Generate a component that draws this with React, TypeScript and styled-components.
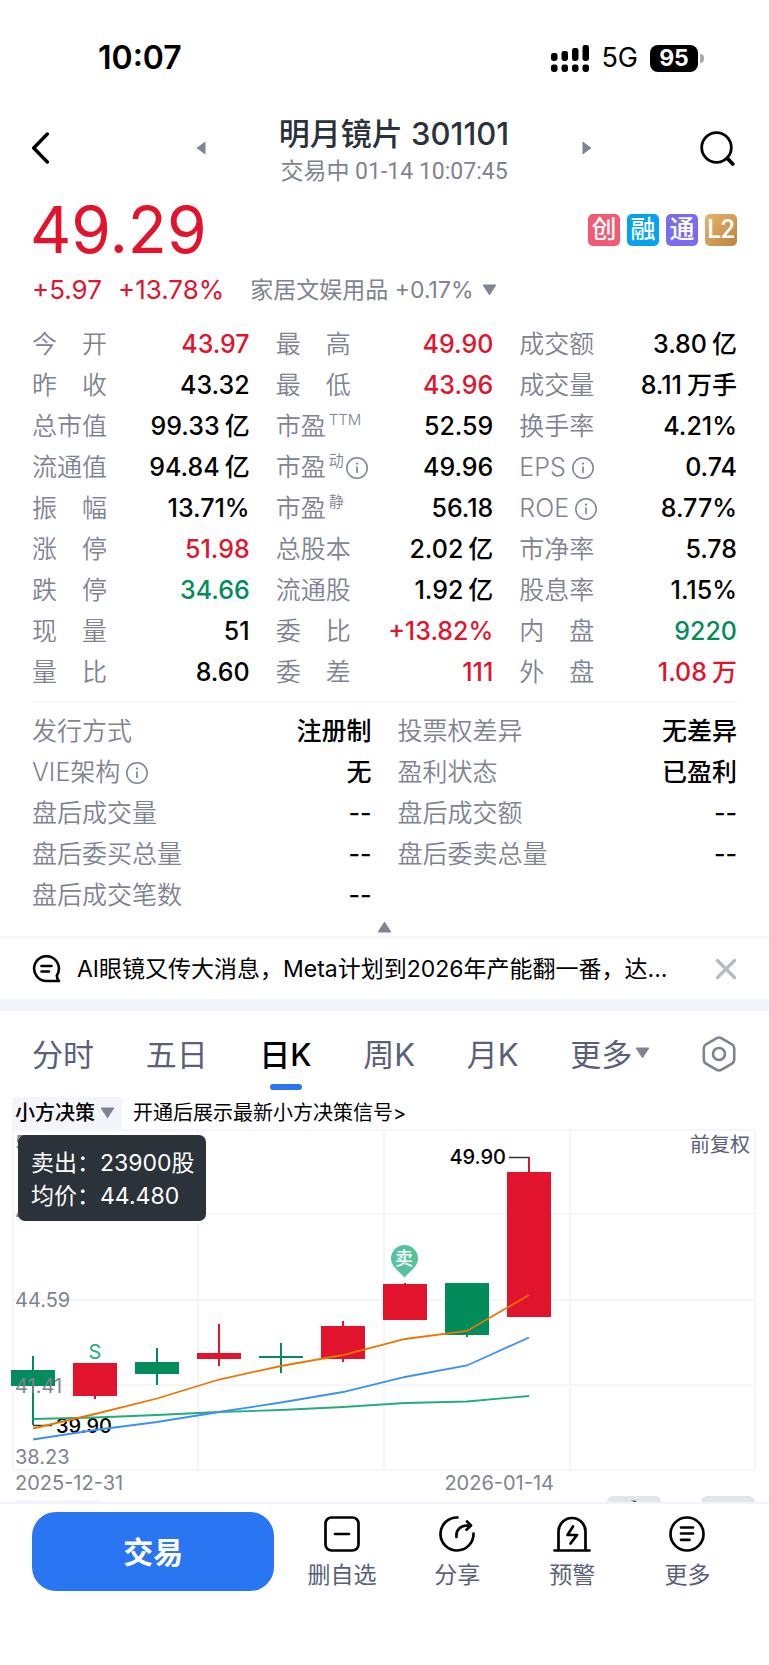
import React from "react";
import styled, { createGlobalStyle, css } from "styled-components";

const color = {
  ink: "#000000",
  title: "#2b3239",
  label: "#7f8392",
  tab: "#5a607a",
  up: "#e2132c",
  down: "#028c5c",
  line: "#f4f5fb",
  blue: "#2a76f2",
};

const GlobalStyle = createGlobalStyle`
  *, *::before, *::after { box-sizing: border-box; }
  body {
    margin: 0;
    background: #ffffff;
    color: ${color.ink};
    font-family: Inter, "Noto Sans CJK SC", sans-serif;
    font-size: 24px;
  }
  button {
    margin: 0;
    padding: 0;
    border: 0;
    background: none;
    color: inherit;
    font: inherit;
    cursor: pointer;
  }
  a { color: inherit; text-decoration: none; }
  h1, p, dl, dd, dt { margin: 0; }
  svg { display: block; flex: none; }
`;

const Page = styled.div`
  min-height: 100vh;
  overflow: hidden;
  background: #ffffff;
`;

/* ---------- status bar ---------- */

const StatusBar = styled.div`
  display: flex;
  align-items: center;
  justify-content: space-between;
  height: 76px;
  padding: 40px 65px 0 98px;
`;

const Clock = styled.span`
  font-size: 32px;
  line-height: 36px;
  font-weight: 600;
`;

const StatusIcons = styled.div`
  display: flex;
  align-items: center;
`;

const Network = styled.span`
  margin: 0 12px;
  font-size: 27px;
  line-height: 36px;
`;

const Battery = styled.span`
  width: 48px;
  height: 27px;
  border-radius: 8px;
  background: ${color.ink};
  color: #ffffff;
  font-size: 23px;
  line-height: 27px;
  font-weight: 700;
  text-align: center;
`;

const BatteryTip = styled.span`
  width: 4px;
  height: 9px;
  margin-left: 2px;
  border-radius: 0 4px 4px 0;
  background: #a9a9a9;
`;

/* ---------- header ---------- */

const Header = styled.header`
  display: flex;
  align-items: center;
  margin-top: 34px;
  padding: 0 32px;
`;

const BackButton = styled.button`
  width: 56px;
`;

const SearchButton = styled.button`
  width: 37px;
`;

const StockSwitcher = styled.div`
  flex: 1;
  display: flex;
  align-items: center;
  justify-content: center;
  gap: 73px;
`;

const StockHeading = styled.div`
  text-align: center;
  white-space: nowrap;
`;

const StockName = styled.h1`
  color: ${color.title};
  font-size: 31px;
  line-height: 48px;
  font-weight: 500;
`;

const StockTime = styled.p`
  color: ${color.label};
  font-family: Roboto, "Noto Sans CJK SC", sans-serif;
  font-size: 23px;
  line-height: 28px;
`;

/* ---------- quote ---------- */

const PriceRow = styled.div`
  display: flex;
  align-items: center;
  justify-content: space-between;
  margin-top: 3px;
  padding: 0 32px 0 30px;
`;

const Price = styled.span`
  color: ${color.up};
  font-size: 64px;
  line-height: 82px;
`;

const Tags = styled.div`
  display: flex;
  gap: 7px;
`;

const Tag = styled.span<{ $bg: string }>`
  width: 32px;
  height: 32px;
  border-radius: 5px;
  background: ${(p) => p.$bg};
  color: #ffffff;
  font-family: Roboto, "Noto Sans CJK SC", sans-serif;
  font-size: 25px;
  line-height: 32px;
  font-weight: 500;
  text-align: center;
`;

const ChangeRow = styled.div`
  display: flex;
  align-items: center;
  padding: 0 32px;
  line-height: 38px;
  white-space: nowrap;
`;

const Change = styled.span`
  margin-right: 16px;
  color: ${color.up};
  font-size: 26px;
`;

const IndustryButton = styled.button`
  display: flex;
  align-items: center;
  gap: 8px;
  margin-left: 10px;
  color: ${color.label};
  font-size: 23px;
  line-height: 38px;
`;

/* ---------- indicator lists ---------- */

const StatGrid = styled.dl<{ $columns: number }>`
  display: grid;
  grid-template-columns: repeat(${(p) => p.$columns}, minmax(0, 1fr));
  column-gap: 26px;
`;

const Stats = styled.section`
  padding: 15px 32px 0;
`;

const MoreStats = styled.section`
  margin: 8px 32px 0;
  padding-top: 8px;
  border-top: 2px solid ${color.line};
`;

const Stat = styled.div`
  display: flex;
  align-items: center;
  justify-content: space-between;
  height: 41px;
  line-height: 41px;
  white-space: nowrap;
`;

const StatLabel = styled.dt`
  display: flex;
  align-items: center;
  color: ${color.label};
  font-size: 25px;
  font-weight: 350;
`;

const Superscript = styled.sup`
  align-self: flex-start;
  margin-left: 3px;
  font-size: 15px;
  line-height: 28px;
`;

const InfoButton = styled.button<{ $tight: boolean }>`
  margin-left: ${(p) => (p.$tight ? 2 : 6)}px;
`;

const StatValue = styled.dd<{ $tone?: Tone }>`
  color: ${(p) => (p.$tone ? color[p.$tone] : color.ink)};
  font-size: 25px;
  font-weight: 500;
`;

const Unit = styled.span`
  margin-left: 5px;
`;

const CollapseButton = styled.button`
  display: flex;
  align-items: flex-end;
  justify-content: center;
  width: 100%;
  height: 20px;
  padding-bottom: 3px;
`;

/* ---------- news ---------- */

const NewsBar = styled.section`
  display: flex;
  align-items: center;
  height: 75px;
  padding: 0 32px;
  border-top: 2px solid ${color.line};
  border-bottom: 12px solid ${color.line};
`;

const NewsLink = styled.a`
  flex: 1;
  min-width: 0;
  margin: 0 24px 0 16px;
  overflow: hidden;
  font-size: 23px;
  line-height: 36px;
  text-overflow: ellipsis;
  white-space: nowrap;
`;

/* ---------- chart tabs ---------- */

const Tabs = styled.nav`
  display: flex;
  align-items: stretch;
  justify-content: space-between;
  height: 86px;
  padding: 0 33px 0 32px;
`;

const Tab = styled.button<{ $active?: boolean }>`
  position: relative;
  display: flex;
  align-items: center;
  gap: 3px;
  padding-bottom: 3px;
  color: ${color.tab};
  font-size: 31px;
  white-space: nowrap;
  ${(p) =>
    p.$active &&
    css`
      color: ${color.ink};
      font-weight: 500;
      &::after {
        content: "";
        position: absolute;
        bottom: 7px;
        left: 50%;
        width: 32px;
        height: 6px;
        margin-left: -16px;
        border-radius: 3px;
        background: ${color.blue};
      }
    `}
`;

const SettingsButton = styled.button`
  display: flex;
  align-items: center;
`;

const SignalRow = styled.div`
  display: flex;
  align-items: center;
  gap: 11px;
  padding: 0 12px;
  font-size: 20px;
  line-height: 32px;
  white-space: nowrap;
`;

const SignalSelect = styled.button`
  display: flex;
  align-items: center;
  gap: 5px;
  height: 32px;
  padding: 0 7px 0 3px;
  border-radius: 4px 4px 0 0;
  background: ${color.line};
  font-weight: 500;
`;

/* ---------- chart ---------- */

const ChartArea = styled.section`
  position: relative;
`;

const ChartSvg = styled.svg`
  width: 100%;
  height: auto;
`;

const AxisText = styled.text`
  fill: ${color.label};
  font-size: 20px;
`;

const MarkText = styled.text`
  fill: ${color.ink};
  font-size: 20px;
  font-weight: 500;
`;

const TradeTooltip = styled.div`
  position: absolute;
  top: 6px;
  left: 18px;
  padding: 12px 11px 8px 13px;
  border-radius: 7px;
  background: #2b3239;
  color: #ffffff;
  font-size: 23px;
  line-height: 33px;
  white-space: nowrap;
`;

const ToolRow = styled.div`
  display: flex;
  align-items: flex-end;
  justify-content: flex-end;
  height: 6px;
  padding: 0 14px;
  gap: 40px;
  overflow: hidden;
`;

const IndicatorPill = styled.div`
  width: 88px;
  height: 2px;
  margin-right: auto;
  border-radius: 4px 4px 0 0;
  background: ${color.line};
`;

const ToolPill = styled.div`
  display: flex;
  align-items: flex-end;
  justify-content: center;
  width: 54px;
  height: 6px;
  border-radius: 6px 6px 0 0;
  background: #e4e5ea;
`;

/* ---------- bottom bar ---------- */

const BottomBar = styled.footer`
  display: flex;
  align-items: center;
  gap: 10px;
  padding: 8px 24px 74px 32px;
  border-top: 2px solid #f1f3fb;
`;

const TradeButton = styled.button`
  flex: 0 0 34%;
  height: 79px;
  padding-bottom: 3px;
  border-radius: 24px;
  background: ${color.blue};
  color: #ffffff;
  font-size: 30px;
  font-weight: 700;
`;

const Actions = styled.div`
  flex: 1;
  display: flex;
  padding-top: 3px;
`;

const Action = styled.button`
  flex: 1;
  display: flex;
  flex-direction: column;
  align-items: center;
  gap: 7px;
  color: ${color.tab};
  font-size: 23px;
  line-height: 31px;
  white-space: nowrap;
`;

/* ---------- icons ---------- */

type Direction = "up" | "down" | "left" | "right";

const trianglePaths: Record<Direction, string> = {
  down: "M1.2 1h12.6L7.5 10.8z",
  up: "M1.2 11h12.6L7.5 1.2z",
  left: "M9 1.2v11.6L1.2 7z",
  right: "M1 1.2v11.6L8.8 7z",
};

function Triangle({ to }: { to: Direction }) {
  const flat = to === "up" || to === "down";
  const w = flat ? 15 : 10;
  const h = flat ? 12 : 14;
  return (
    <svg width={w} height={h} viewBox={`0 0 ${w} ${h}`} aria-hidden="true">
      <path d={trianglePaths[to]} fill={color.label} stroke={color.label} strokeLinejoin="round" />
    </svg>
  );
}

function SignalIcon() {
  const bars = [
    { x: 0, y: 8 },
    { x: 10.5, y: 6 },
    { x: 21, y: 3 },
    { x: 31.5, y: 0 },
  ];
  return (
    <svg width="38" height="27" viewBox="0 0 38 27" aria-hidden="true">
      {bars.map((b) => (
        <g key={b.x}>
          <rect x={b.x} y={b.y} width="6.5" height={16 - b.y} rx="2.4" />
          <rect x={b.x} y="19.5" width="6.5" height="7.5" rx="2.4" />
        </g>
      ))}
    </svg>
  );
}

function InfoIcon() {
  return (
    <svg width="22" height="22" viewBox="0 0 22 22" fill="none" stroke={color.label} aria-hidden="true">
      <circle cx="11" cy="11" r="10.2" strokeWidth="1.5" />
      <path d="M11 9.5v6.5" strokeWidth="1.7" />
      <circle cx="11" cy="6.6" r="1.1" fill={color.label} stroke="none" />
    </svg>
  );
}

/* ---------- data ---------- */

type Tone = "up" | "down";

interface StatItem {
  label: string;
  value: string;
  unit?: string;
  tone?: Tone;
  sup?: string;
  info?: boolean;
}

const mainStats: StatItem[] = [
  { label: "今　开", value: "43.97", tone: "up" },
  { label: "最　高", value: "49.90", tone: "up" },
  { label: "成交额", value: "3.80", unit: "亿" },
  { label: "昨　收", value: "43.32" },
  { label: "最　低", value: "43.96", tone: "up" },
  { label: "成交量", value: "8.11", unit: "万手" },
  { label: "总市值", value: "99.33", unit: "亿" },
  { label: "市盈", sup: "TTM", value: "52.59" },
  { label: "换手率", value: "4.21%" },
  { label: "流通值", value: "94.84", unit: "亿" },
  { label: "市盈", sup: "动", info: true, value: "49.96" },
  { label: "EPS", info: true, value: "0.74" },
  { label: "振　幅", value: "13.71%" },
  { label: "市盈", sup: "静", value: "56.18" },
  { label: "ROE", info: true, value: "8.77%" },
  { label: "涨　停", value: "51.98", tone: "up" },
  { label: "总股本", value: "2.02", unit: "亿" },
  { label: "市净率", value: "5.78" },
  { label: "跌　停", value: "34.66", tone: "down" },
  { label: "流通股", value: "1.92", unit: "亿" },
  { label: "股息率", value: "1.15%" },
  { label: "现　量", value: "51" },
  { label: "委　比", value: "+13.82%", tone: "up" },
  { label: "内　盘", value: "9220", tone: "down" },
  { label: "量　比", value: "8.60" },
  { label: "委　差", value: "111", tone: "up" },
  { label: "外　盘", value: "1.08", unit: "万", tone: "up" },
];

const extraStats: StatItem[] = [
  { label: "发行方式", value: "注册制" },
  { label: "投票权差异", value: "无差异" },
  { label: "VIE架构", info: true, value: "无" },
  { label: "盈利状态", value: "已盈利" },
  { label: "盘后成交量", value: "--" },
  { label: "盘后成交额", value: "--" },
  { label: "盘后委买总量", value: "--" },
  { label: "盘后委卖总量", value: "--" },
  { label: "盘后成交笔数", value: "--" },
];

const tags = [
  { text: "创", bg: "#f25a74" },
  { text: "融", bg: "#06a3ec" },
  { text: "通", bg: "#7a6cf0" },
  { text: "L2", bg: "linear-gradient(135deg, #ecb56c, #b98240)" },
];

const tabs = ["分时", "五日", "日K", "周K", "月K"];

interface Candle {
  x: number;
  top: number;
  bottom: number;
  high: number;
  low: number;
  tone: Tone;
}

const candles: Candle[] = [
  { x: 33, top: 241, bottom: 257, high: 227, low: 296, tone: "down" },
  { x: 95, top: 234, bottom: 267, high: 234, low: 270, tone: "up" },
  { x: 157, top: 233, bottom: 245, high: 219, low: 256, tone: "down" },
  { x: 219, top: 224, bottom: 230, high: 195, low: 237, tone: "up" },
  { x: 281, top: 227, bottom: 229, high: 214, low: 244, tone: "down" },
  { x: 343, top: 197, bottom: 230, high: 192, low: 233, tone: "up" },
  { x: 405, top: 155, bottom: 191, high: 154, low: 191, tone: "up" },
  { x: 467, top: 154, bottom: 206, high: 154, low: 208, tone: "down" },
  { x: 529, top: 43, bottom: 188, high: 28, low: 188, tone: "up" },
];

const averages = [
  { stroke: "#1fae7c", ys: [290, 288.5, 286, 283, 281, 278, 274, 272.5, 267] },
  { stroke: "#3a92f2", ys: [310.5, 301, 293, 283, 273.5, 263, 248, 236.5, 208.5] },
  { stroke: "#ee7500", ys: [299.5, 285, 269.5, 250.5, 237, 226, 210, 202, 166] },
];

const priceLabels = [
  { text: "50.94", y: 21 },
  { text: "47.77", y: 91 },
  { text: "44.59", y: 178 },
  { text: "41.41", y: 264 },
  { text: "38.23", y: 335 },
];

/* ---------- pieces ---------- */

function StatList({ items, columns }: { items: StatItem[]; columns: number }) {
  return (
    <StatGrid $columns={columns}>
      {items.map((s, i) => (
        <Stat key={i}>
          <StatLabel>
            {s.label}
            {s.sup && <Superscript>{s.sup}</Superscript>}
            {s.info && (
              <InfoButton type="button" $tight={Boolean(s.sup)} aria-label={`${s.label}说明`}>
                <InfoIcon />
              </InfoButton>
            )}
          </StatLabel>
          <StatValue $tone={s.tone}>
            {s.value}
            {s.unit && <Unit>{s.unit}</Unit>}
          </StatValue>
        </Stat>
      ))}
    </StatGrid>
  );
}

function CandleChart() {
  return (
    <ChartSvg viewBox="0 0 769 367" role="img" aria-label="日K线图">
      <g stroke={color.line} strokeWidth="2">
        {[1, 85, 171, 256, 341].map((y) => (
          <path key={y} d={`M12 ${y}H756`} />
        ))}
        {[13, 198, 384, 570, 755].map((x) => (
          <path key={x} d={`M${x} 1V341`} />
        ))}
      </g>
      {candles.map((c) => (
        <g key={c.x} fill={color[c.tone]}>
          <rect x={c.x - 22} y={c.top} width="44" height={c.bottom - c.top} />
          <rect x={c.x - 1} y={c.high} width="2" height={c.low - c.high} />
        </g>
      ))}
      <path d="M33 296.5H52M509 28.5H529" stroke="#333333" strokeWidth="1.3" />
      <MarkText x="56" y="304">39.90</MarkText>
      <MarkText x="506" y="35" textAnchor="end">49.90</MarkText>
      {averages.map((a) => (
        <polyline
          key={a.stroke}
          points={a.ys.map((y, i) => `${33 + i * 62},${y}`).join(" ")}
          fill="none"
          stroke={a.stroke}
          strokeWidth="1.8"
        />
      ))}
      {priceLabels.map((p) => (
        <AxisText key={p.text} x="15" y={p.y}>
          {p.text}
        </AxisText>
      ))}
      <AxisText x="15" y="361">2025-12-31</AxisText>
      <AxisText x="554" y="361" textAnchor="end">2026-01-14</AxisText>
      <text x="750" y="23" textAnchor="end" fontSize="20" fill={color.tab}>
        前复权
      </text>
      <text x="95" y="230" textAnchor="middle" fontSize="20" fill="#1fae7c">
        S
      </text>
      <path
        d="M404.5 148.5C401 144 391 138 391 129.5A13.5 13.5 0 0 1 418 129.5C418 138 408 144 404.5 148.5z"
        fill="#56c29d"
      />
      <text x="404" y="136" textAnchor="middle" fontSize="18" fontWeight="500" fill="#ffffff">
        卖
      </text>
    </ChartSvg>
  );
}

export default function App() {
  return (
    <Page>
      <GlobalStyle />

      <StatusBar>
        <Clock>10:07</Clock>
        <StatusIcons>
          <SignalIcon />
          <Network>5G</Network>
          <Battery>95</Battery>
          <BatteryTip />
        </StatusIcons>
      </StatusBar>

      <Header>
        <BackButton type="button" aria-label="返回">
          <svg width="18" height="32" viewBox="0 0 18 32" fill="none" stroke="#000" strokeWidth="3.4" strokeLinecap="round" strokeLinejoin="round">
            <path d="M15.3 2L1.7 16l13.6 14" />
          </svg>
        </BackButton>
        <StockSwitcher>
          <button type="button" aria-label="上一只">
            <Triangle to="left" />
          </button>
          <StockHeading>
            <StockName>明月镜片 301101</StockName>
            <StockTime>交易中 01-14 10:07:45</StockTime>
          </StockHeading>
          <button type="button" aria-label="下一只">
            <Triangle to="right" />
          </button>
        </StockSwitcher>
        <SearchButton type="button" aria-label="搜索">
          <svg width="37" height="37" viewBox="0 0 37 37" fill="none" stroke="#000" strokeWidth="2.8" strokeLinecap="round">
            <circle cx="16.5" cy="17.5" r="14.8" />
            <path d="M27.5 28.5l5.3 5.5" strokeWidth="3.8" />
          </svg>
        </SearchButton>
      </Header>

      <main>
        <PriceRow>
          <Price>49.29</Price>
          <Tags>
            {tags.map((t) => (
              <Tag key={t.text} $bg={t.bg}>
                {t.text}
              </Tag>
            ))}
          </Tags>
        </PriceRow>
        <ChangeRow>
          <Change>+5.97</Change>
          <Change>+13.78%</Change>
          <IndustryButton type="button">
            家居文娱用品 +0.17%
            <Triangle to="down" />
          </IndustryButton>
        </ChangeRow>

        <Stats>
          <StatList items={mainStats} columns={3} />
        </Stats>
        <MoreStats>
          <StatList items={extraStats} columns={2} />
        </MoreStats>
        <CollapseButton type="button" aria-label="收起">
          <Triangle to="up" />
        </CollapseButton>

        <NewsBar>
          <svg width="29" height="28" viewBox="0 0 29 28" fill="none" stroke="#000" strokeWidth="2.6" strokeLinecap="round" strokeLinejoin="round">
            <path d="M24.8 20.5A12.4 12.4 0 1 0 14.5 26H27c-1.4-1.6-2.2-3.2-2.2-5.5z" />
            <path d="M9.5 11h10M9.5 16.5h7.5" />
          </svg>
          <NewsLink href="#news">AI眼镜又传大消息，Meta计划到2026年产能翻一番，达...</NewsLink>
          <button type="button" aria-label="关闭">
            <svg width="22" height="22" viewBox="0 0 22 22" stroke="#b4b9c6" strokeWidth="3.2" strokeLinecap="round">
              <path d="M2.5 2.5l17 17M19.5 2.5l-17 17" />
            </svg>
          </button>
        </NewsBar>

        <Tabs>
          {tabs.map((t) => (
            <Tab key={t} type="button" $active={t === "日K"}>
              {t}
            </Tab>
          ))}
          <Tab type="button">
            更多
            <Triangle to="down" />
          </Tab>
          <SettingsButton type="button" aria-label="图表设置">
            <svg width="34" height="36" viewBox="0 0 34 36" fill="none" stroke={color.label} strokeWidth="2.6" strokeLinejoin="round">
              <path d="M14.8 2.1a4.4 4.4 0 0 1 4.4 0L30 8.4a4.4 4.4 0 0 1 2.2 3.8v11.6a4.4 4.4 0 0 1-2.2 3.8l-10.8 6.3a4.4 4.4 0 0 1-4.4 0L4 27.6a4.4 4.4 0 0 1-2.2-3.8V12.2A4.4 4.4 0 0 1 4 8.4z" />
              <circle cx="17" cy="18" r="6" />
            </svg>
          </SettingsButton>
        </Tabs>

        <SignalRow>
          <SignalSelect type="button">
            小方决策
            <Triangle to="down" />
          </SignalSelect>
          <a href="#signal">开通后展示最新小方决策信号&gt;</a>
        </SignalRow>

        <ChartArea>
          <CandleChart />
          <TradeTooltip>
            <p>卖出：23900股</p>
            <p>均价：44.480</p>
          </TradeTooltip>
        </ChartArea>
        <ToolRow>
          <IndicatorPill />
          <ToolPill>
            <svg width="8" height="2" viewBox="0 0 8 2" aria-hidden="true">
              <path d="M1 .5h4l2 1.5H4z" fill="#555" />
            </svg>
          </ToolPill>
          <ToolPill />
        </ToolRow>
      </main>

      <BottomBar>
        <TradeButton type="button">交易</TradeButton>
        <Actions>
          <Action type="button">
            <svg width="38" height="38" viewBox="0 0 38 38" fill="none" stroke="#000" strokeWidth="2.7" strokeLinecap="round">
              <rect x="2.5" y="2.5" width="33" height="33" rx="6" />
              <path d="M12 19h14" />
            </svg>
            删自选
          </Action>
          <Action type="button">
            <svg width="38" height="38" viewBox="0 0 38 38" fill="none" stroke="#000" strokeWidth="2.7" strokeLinecap="round" strokeLinejoin="round">
              <path d="M19.5 2.5A16.5 16.5 0 1 0 35.5 18.5" />
              <path d="M18.5 22c-.8-7.5 4-12 14-11.5M29 6.5l4 4-4.5 4.2" />
            </svg>
            分享
          </Action>
          <Action type="button">
            <svg width="38" height="38" viewBox="0 0 38 38" fill="none" stroke="#000" strokeWidth="2.7" strokeLinecap="round" strokeLinejoin="round">
              <path d="M5.5 35.5V16.5a13.5 13.5 0 0 1 27 0v19M1.5 35.5h35" />
              <path d="M20 11.5l-5.5 8.5h9.5l-6.5 8.5" />
            </svg>
            预警
          </Action>
          <Action type="button">
            <svg width="38" height="38" viewBox="0 0 38 38" fill="none" stroke="#000" strokeWidth="2.7" strokeLinecap="round">
              <circle cx="19" cy="19" r="16.5" />
              <path d="M13 12.5h12M13 18.5h12M13 24.8h8.5" />
            </svg>
            更多
          </Action>
        </Actions>
      </BottomBar>
    </Page>
  );
}
